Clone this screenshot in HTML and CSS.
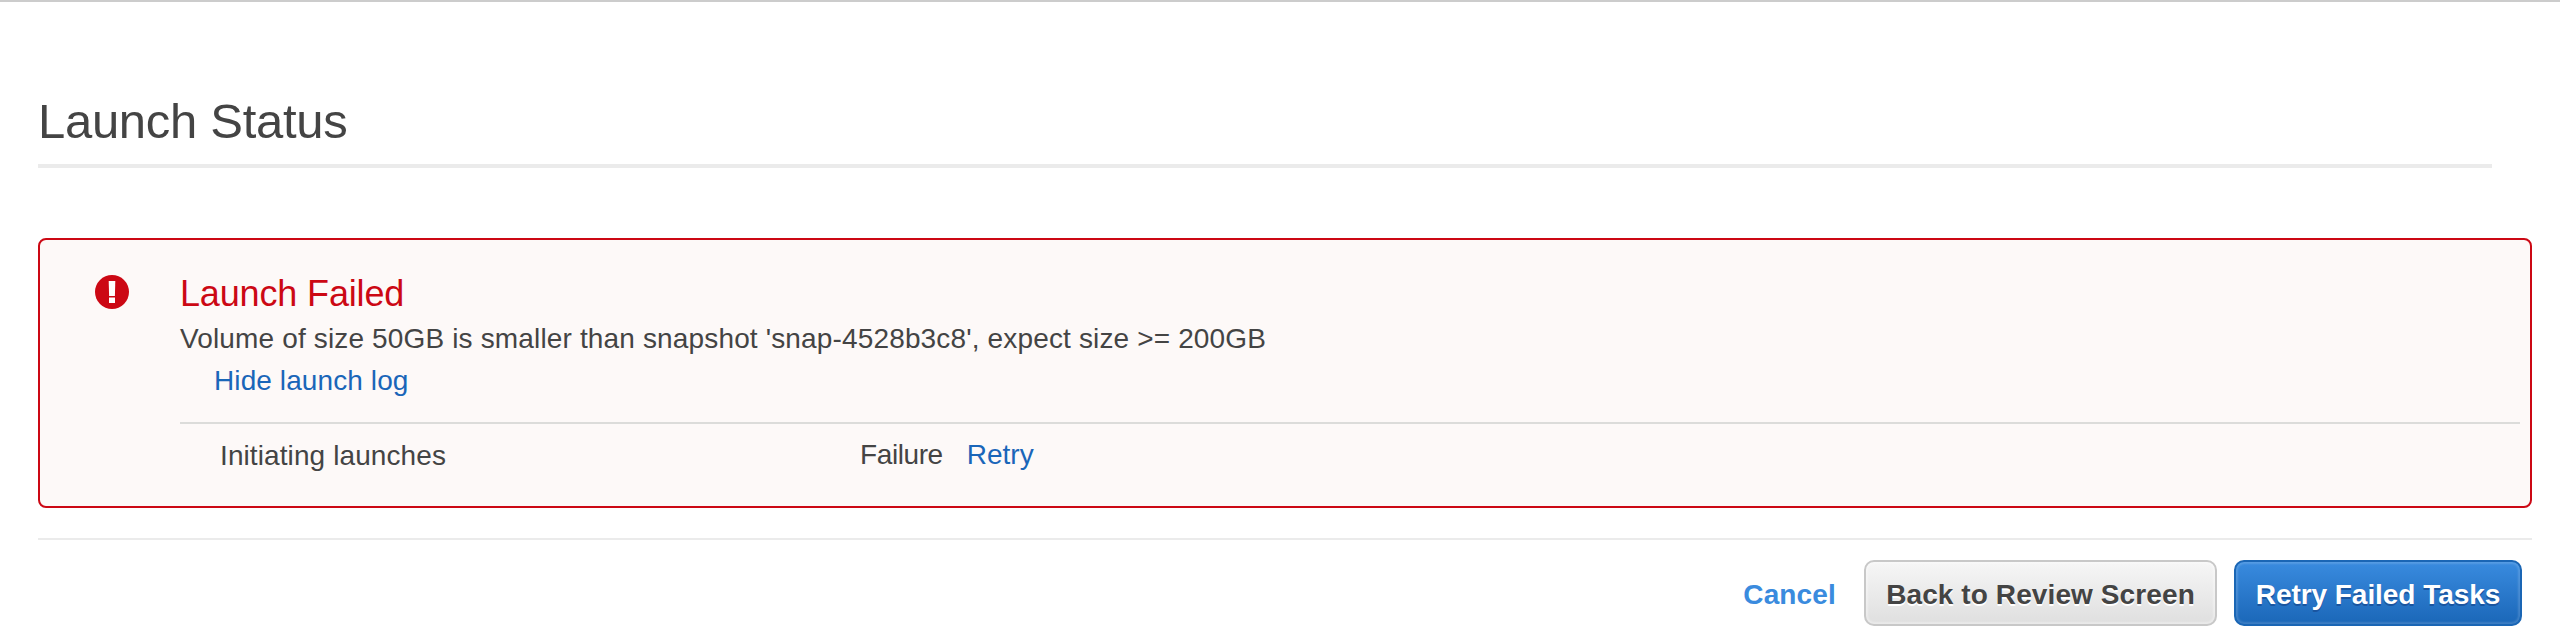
FILE: index.html
```html
<!DOCTYPE html>
<html lang="en">
<head>
<meta charset="utf-8">
<title>Launch Status</title>
<link rel="stylesheet" href="styles.css">
</head>
<body>
<main class="page">
  <h1 class="title">Launch Status</h1>
  <section class="alert">
    <svg class="alert-icon" viewBox="0 0 34 34" aria-hidden="true">
      <circle cx="17" cy="17" r="17" fill="#cc0814"/>
      <path d="M13.7 6h6.6l-.4 15h-5.8z" fill="#fff"/>
      <path d="M14 22.5h6V28h-6z" fill="#fff"/>
    </svg>
    <div class="alert-body">
      <h2 class="alert-title">Launch Failed</h2>
      <p class="alert-message">Volume of size 50GB is smaller than snapshot 'snap-4528b3c8', expect size &gt;= 200GB</p>
      <p class="log-toggle"><a class="link">Hide launch log</a></p>
      <div class="log-row">
        <span class="task">Initiating launches</span>
        <span class="result">Failure</span>
        <a class="link retry">Retry</a>
      </div>
    </div>
  </section>
  <footer class="actions">
    <a class="cancel">Cancel</a>
    <button class="button secondary">Back to Review Screen</button>
    <button class="button primary">Retry Failed Tasks</button>
  </footer>
</main>
</body>
</html>
```
FILE: styles.css
```css
* {
  box-sizing: border-box;
}

body {
  margin: 0;
  background: #fff;
  color: #444;
  font: 28px/42px "Liberation Sans", Arial, sans-serif;
}

h1, h2, p {
  margin: 0;
  font-weight: normal;
}

.page {
  height: 644px;
  padding: 84px 28px 0 38px;
  border-top: 2px solid #ccc;
}

.title {
  height: 82px;
  margin-right: 40px;
  border-bottom: 4px solid #ebebeb;
  font-size: 49px;
  line-height: 70px;
  letter-spacing: -.3px;
}

.alert {
  display: flex;
  align-items: flex-start;
  height: 270px;
  margin-top: 70px;
  padding: 32px 10px 0 55px;
  border: 2px solid #cc0814;
  border-radius: 8px;
  background: #fdf9f8;
}

.alert-icon {
  flex: none;
  width: 34px;
  height: 34px;
  margin-top: 3px;
}

.alert-body {
  flex: 1;
  margin-left: 51px;
}

.alert-title {
  height: 46px;
  color: #cc0814;
  font-size: 36px;
  line-height: 43px;
  letter-spacing: -.15px;
}

.alert-message {
  letter-spacing: .15px;
  white-space: nowrap;
}

.link {
  color: #1a66b9;
}

.log-toggle {
  height: 62px;
  padding-left: 34px;
  letter-spacing: .1px;
}

.log-row {
  display: flex;
  padding-top: 10px;
  border-top: 2px solid #dcdcda;
}

.task {
  width: 680px;
  padding: 1px 0 0 40px;
  letter-spacing: .1px;
}

.result {
  letter-spacing: -.4px;
}

.retry {
  margin-left: 24px;
}

.actions {
  display: flex;
  justify-content: flex-end;
  align-items: center;
  margin-top: 30px;
  padding: 20px 10px 0 0;
  border-top: 2px solid #ebebeb;
  font-weight: bold;
}

.cancel {
  margin-right: 28px;
  padding-top: 3px;
  color: #3a8bde;
  letter-spacing: .15px;
}

.button {
  height: 66px;
  padding: 3px 0 0;
  border: 2px solid #c8c8c8;
  border-radius: 10px;
  font: inherit;
  white-space: nowrap;
}

.secondary {
  width: 353px;
  margin-right: 17px;
  color: #444;
  background: linear-gradient(#f6f6f6, #dfdfdf);
  box-shadow: inset 0 0 2px 2px rgba(255, 255, 255, .35);
  letter-spacing: .1px;
  text-shadow: 0 2px 0 #fff;
}

.primary {
  width: 288px;
  border-color: #1a66b5;
  color: #fff;
  background: linear-gradient(#398bdf, #1b67b8);
  box-shadow: inset 0 0 2px 2px rgba(255, 255, 255, .15);
  letter-spacing: -.05px;
  text-shadow: 0 2px 0 #1a55a0;
}
```
